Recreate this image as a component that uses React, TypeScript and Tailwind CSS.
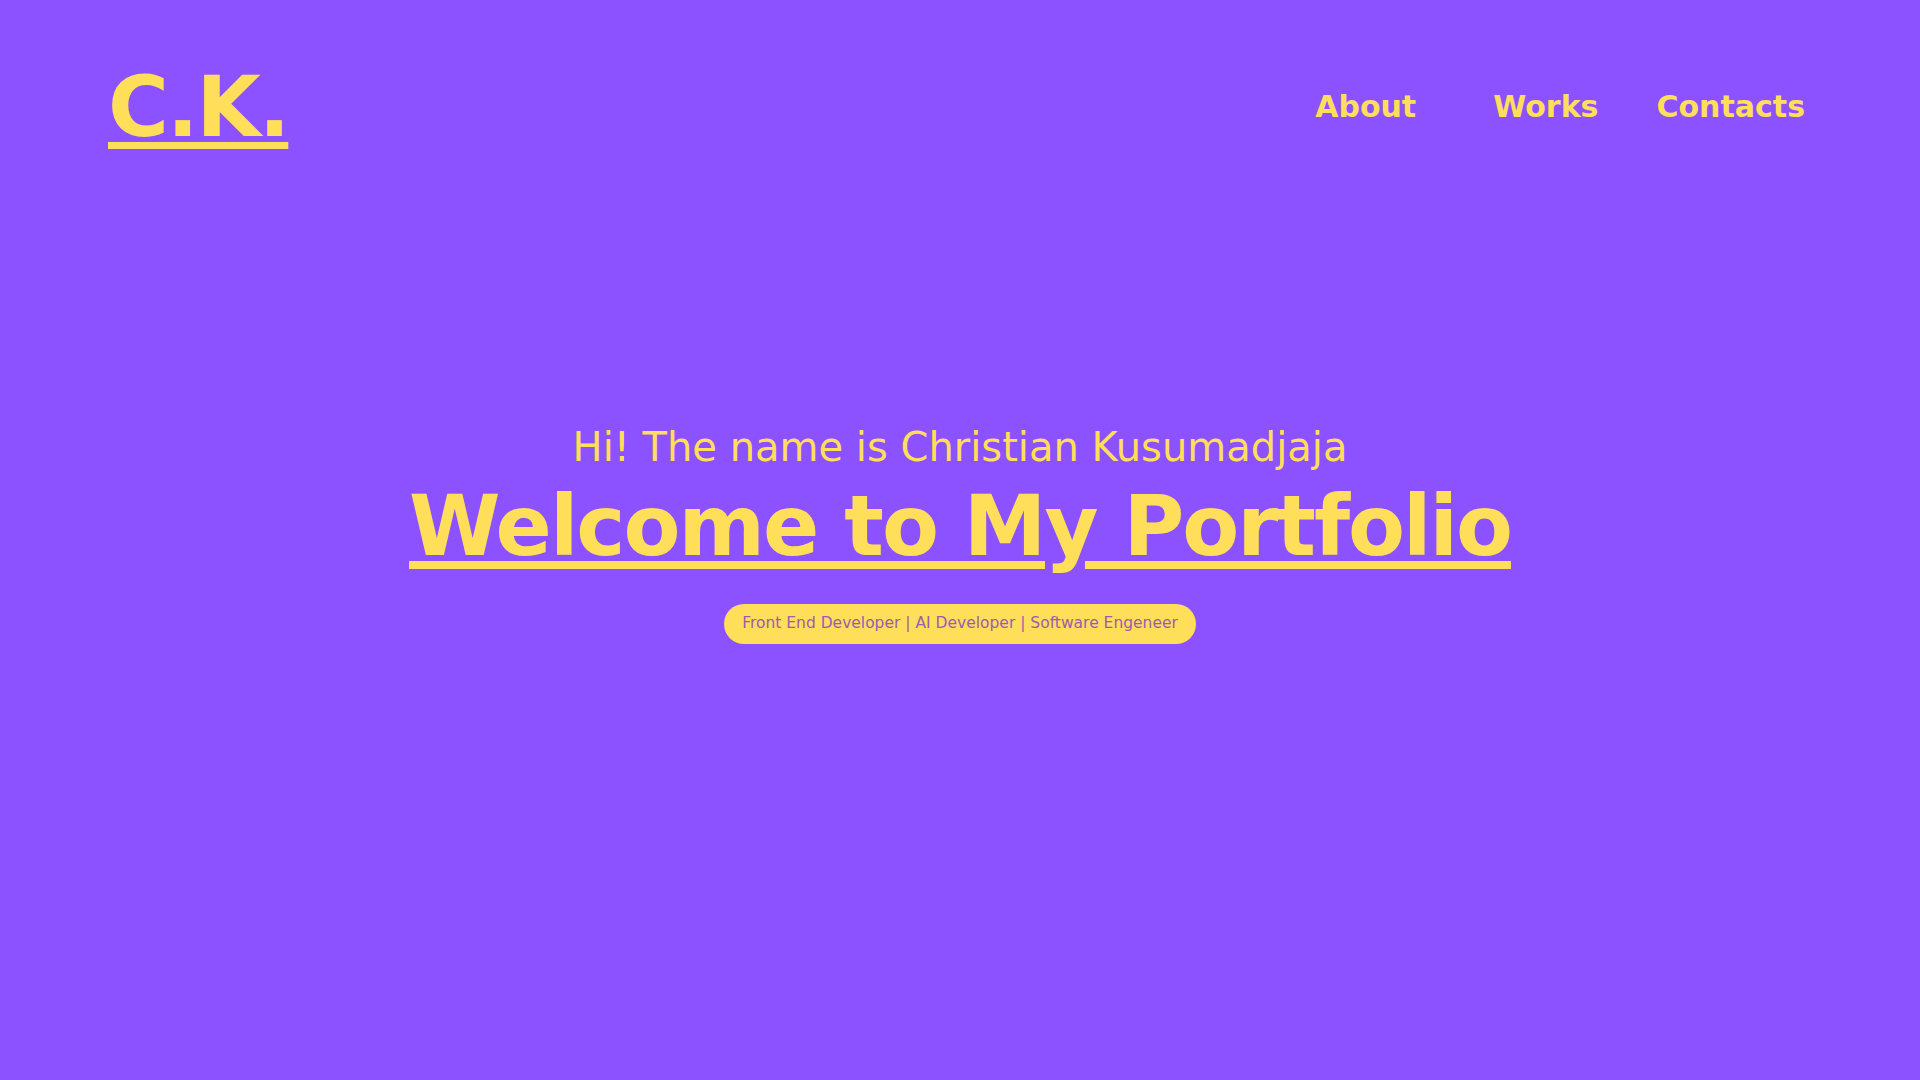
import React from "react";

export default function App() {
  const font = { fontFamily: '"DejaVu Sans", "Noto Sans", sans-serif' };
  return (
    <div className="flex h-screen w-full flex-col bg-[#8c52ff] text-[#ffde59]" style={font}>
      <header className="flex items-start justify-between pl-[108px] pr-[115px] pt-[66px]">
        <a href="#" className="text-[83px] font-bold leading-none underline decoration-[7px] underline-offset-[6px] tracking-[-2px]">
          C.K.
        </a>
        <nav className="flex items-center pt-[26px] text-[30px] font-bold leading-none">
          <a href="#" className="mr-[77px]">About</a>
          <a href="#" className="mr-[58px]">Works</a>
          <a href="#">Contacts</a>
        </nav>
      </header>
      <main className="flex flex-1 flex-col items-center justify-center pb-[163px]">
        <p className="text-[40px] leading-tight">Hi! The name is Christian Kusumadjaja</p>
        <h1 className="text-[83px] font-bold leading-none underline decoration-[8px] underline-offset-[6px] tracking-[-2px] mt-[13px]">
          Welcome to My Portfolio
        </h1>
        <div className="mt-[36px] rounded-full bg-[#ffde59] px-[18px] py-[8px] text-[15.5px] text-[#9d5cb0]">
          Front End Developer | AI Developer | Software Engeneer
        </div>
      </main>
    </div>
  );
}
